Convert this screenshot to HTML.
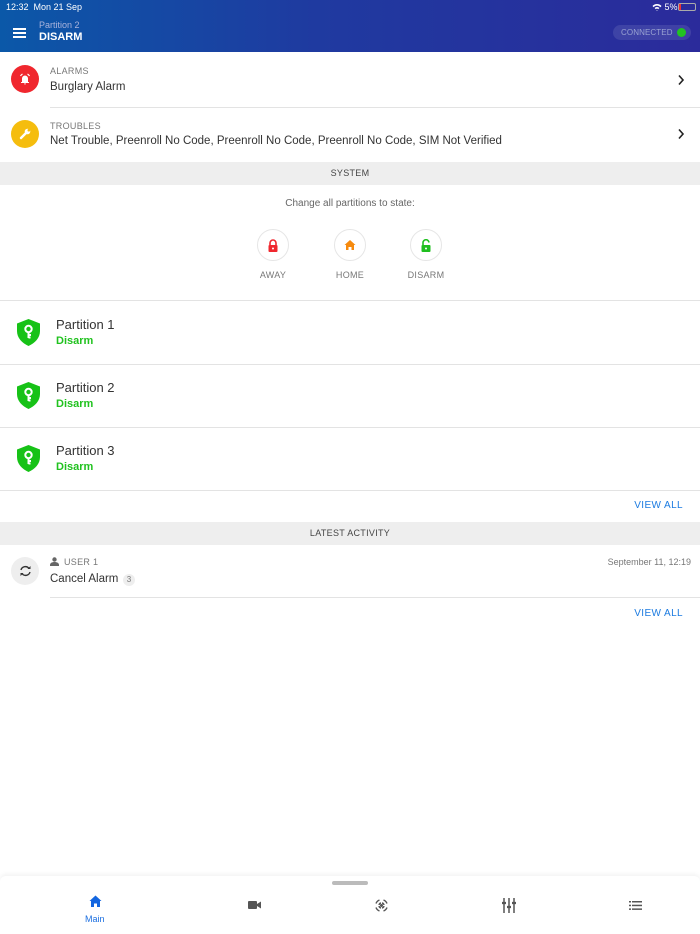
<!DOCTYPE html>
<html><head><meta charset="utf-8"><style>
*{margin:0;padding:0;box-sizing:border-box}
body{width:700px;height:934px;overflow:hidden;background:#fff;font-family:"Liberation Sans",sans-serif;position:relative;color:#333}
.a{position:absolute}
.hdr{left:0;top:0;width:700px;height:52px;background:linear-gradient(90deg,#0b58a8 0%,#1f3aa0 45%,#2b2b9b 100%)}
.w{color:#fff}
.line{height:1px;background:#e3e3e3}
.bar{left:0;width:700px;background:#eeeeee;font-size:9px;color:#444;text-align:center;letter-spacing:.3px}
.lbl{font-size:9px;color:#777;letter-spacing:.3px}
.txt{font-size:11.5px;color:#333}
.circ{width:32px;height:32px;border-radius:50%;border:1px solid #e6e6e6;display:flex;align-items:center;justify-content:center}
.cl{font-size:9px;color:#777;width:60px;text-align:center;letter-spacing:.3px}
.pt{font-size:13px;color:#333}
.ps{font-size:11px;color:#21c21f;font-weight:bold}
.va{font-size:10px;color:#1c7be0;letter-spacing:.4px;right:17px}
</style></head><body>
<div class="a hdr"></div>
<div class="a w" style="left:6px;top:2px;font-size:9px">12:32 &nbsp;Mon 21 Sep</div>
<div class="a w" style="left:652px;top:2px;font-size:9px">
<svg width="10" height="8" viewBox="0 0 10 8" style="vertical-align:-1px"><path d="M0.5 3A6 6 0 0 1 9.5 3L8.3 4.2A4.3 4.3 0 0 0 1.7 4.2Z M2.6 5A3.3 3.3 0 0 1 7.4 5L6.2 6.2A1.6 1.6 0 0 0 3.8 6.2Z M4.2 7L5 7.8 5.8 7Z" fill="#fff"/></svg> 5%</div>
<div class="a" style="left:678px;top:3px;width:18px;height:8px;border:1px solid #aaa;border-radius:2px"><div style="width:2px;height:6px;background:#e33"></div></div>
<div class="a" style="left:13px;top:28px;width:13px;height:2px;background:#fff;box-shadow:0 4px 0 #fff,0 8px 0 #fff"></div>
<div class="a" style="left:39px;top:20px;font-size:9px;color:#aab4dc">Partition 2</div>
<div class="a w" style="left:39px;top:31px;font-size:11px;font-weight:bold">DISARM</div>
<div class="a" style="left:613px;top:25px;width:78px;height:15px;border-radius:8px;background:rgba(255,255,255,.1)"></div>
<div class="a" style="left:621px;top:28px;font-size:8px;color:#9aa3d2;letter-spacing:.1px">CONNECTED</div>
<div class="a" style="left:677px;top:28px;width:9px;height:9px;border-radius:50%;background:#22c322"></div>

<div class="a" style="left:11px;top:65px;width:28px;height:28px;border-radius:50%;background:#f0272e;display:flex;align-items:center;justify-content:center">
<svg width="14" height="14" viewBox="0 0 14 14"><path d="M4 10V6.5A3 3 0 0 1 10 6.5V10H11V11H3V10Z M6 11.5H8A1 1 0 0 1 6 11.5" fill="#fff"/><path d="M2.5 4A5 5 0 0 1 4.5 2 M11.5 4A5 5 0 0 0 9.5 2" stroke="#fff" stroke-width="1.2" fill="none"/></svg></div>
<div class="a lbl" style="left:50px;top:66px">ALARMS</div>
<div class="a txt" style="left:50px;top:81px">Burglary Alarm</div>
<svg class="a" style="left:677px;top:74px" width="8" height="12" viewBox="0 0 8 12"><path d="M2 1.5L6 6 2 10.5" stroke="#222" stroke-width="1.6" fill="none"/></svg>
<div class="a line" style="left:50px;top:107px;width:650px"></div>
<div class="a" style="left:11px;top:120px;width:28px;height:28px;border-radius:50%;background:#f5bd0e;display:flex;align-items:center;justify-content:center">
<svg width="14" height="14" viewBox="0 0 14 14"><path d="M3 11L8 6" stroke="#fff" stroke-width="2.4" stroke-linecap="round"/><circle cx="9.5" cy="4.5" r="2.8" fill="#fff"/><circle cx="10.8" cy="3.2" r="1.3" fill="#f5bd0e"/></svg></div>
<div class="a lbl" style="left:50px;top:121px">TROUBLES</div>
<div class="a txt" style="left:50px;top:135px">Net Trouble, Preenroll No Code, Preenroll No Code, Preenroll No Code, SIM Not Verified</div>
<svg class="a" style="left:677px;top:128px" width="8" height="12" viewBox="0 0 8 12"><path d="M2 1.5L6 6 2 10.5" stroke="#222" stroke-width="1.6" fill="none"/></svg>

<div class="a bar" style="top:162px;height:23px;line-height:23px">SYSTEM</div>
<div class="a" style="left:0;width:700px;top:198px;text-align:center;font-size:10px;color:#666">Change all partitions to state:</div>
<div class="a circ" style="left:257px;top:229px"><svg width="12" height="13" viewBox="0 0 12 13"><path d="M3 6V4A3 3 0 0 1 9 4V6" stroke="#f0272e" stroke-width="1.6" fill="none"/><rect x="1.5" y="6" width="9" height="7" rx="1" fill="#f0272e"/><circle cx="6" cy="9.5" r="1" fill="#fff"/></svg></div>
<div class="a circ" style="left:334px;top:229px"><svg width="12" height="12" viewBox="0 0 12 12"><path d="M6 1L11.5 6H10V11H7.5V8H4.5V11H2V6H0.5Z" fill="#f68a0e"/></svg></div>
<div class="a circ" style="left:410px;top:229px"><svg width="12" height="13" viewBox="0 0 12 13"><path d="M3 6V4A3 3 0 0 1 9 3.5" stroke="#1fbf1f" stroke-width="1.6" fill="none"/><rect x="1.5" y="6" width="9" height="7" rx="1" fill="#1fbf1f"/><circle cx="6" cy="9.5" r="1" fill="#fff"/></svg></div>
<div class="a cl" style="left:243px;top:270px">AWAY</div>
<div class="a cl" style="left:320px;top:270px">HOME</div>
<div class="a cl" style="left:396px;top:270px">DISARM</div>
<div class="a line" style="left:0;top:300px;width:700px"></div>

<div class="a" style="left:0;top:300px;width:700px">
<svg class="a" style="left:17px;top:19px" width="23" height="27" viewBox="0 0 23 27"><path d="M11.5 0L23 4.5V12C23 19 18 24 11.5 27 5 24 0 19 0 12V4.5Z" fill="#17c217"/><circle cx="11.5" cy="10" r="3.2" stroke="#fff" stroke-width="2" fill="none"/><path d="M11.5 13V19M11.5 16H14M11.5 18.5H13.5" stroke="#fff" stroke-width="2"/></svg>
<div class="a pt" style="left:56px;top:17px">Partition 1</div><div class="a ps" style="left:56px;top:35px">Disarm</div></div>
<div class="a line" style="left:0;top:364px;width:700px"></div>
<div class="a" style="left:0;top:363px;width:700px">
<svg class="a" style="left:17px;top:19px" width="23" height="27" viewBox="0 0 23 27"><path d="M11.5 0L23 4.5V12C23 19 18 24 11.5 27 5 24 0 19 0 12V4.5Z" fill="#17c217"/><circle cx="11.5" cy="10" r="3.2" stroke="#fff" stroke-width="2" fill="none"/><path d="M11.5 13V19M11.5 16H14M11.5 18.5H13.5" stroke="#fff" stroke-width="2"/></svg>
<div class="a pt" style="left:56px;top:17px">Partition 2</div><div class="a ps" style="left:56px;top:35px">Disarm</div></div>
<div class="a line" style="left:0;top:427px;width:700px"></div>
<div class="a" style="left:0;top:426px;width:700px">
<svg class="a" style="left:17px;top:19px" width="23" height="27" viewBox="0 0 23 27"><path d="M11.5 0L23 4.5V12C23 19 18 24 11.5 27 5 24 0 19 0 12V4.5Z" fill="#17c217"/><circle cx="11.5" cy="10" r="3.2" stroke="#fff" stroke-width="2" fill="none"/><path d="M11.5 13V19M11.5 16H14M11.5 18.5H13.5" stroke="#fff" stroke-width="2"/></svg>
<div class="a pt" style="left:56px;top:17px">Partition 3</div><div class="a ps" style="left:56px;top:35px">Disarm</div></div>
<div class="a line" style="left:0;top:490px;width:700px"></div>
<div class="a va" style="top:500px">VIEW ALL</div>

<div class="a bar" style="top:522px;height:23px;line-height:23px">LATEST ACTIVITY</div>
<div class="a" style="left:11px;top:557px;width:28px;height:28px;border-radius:50%;background:#eeeeee;display:flex;align-items:center;justify-content:center">
<svg width="13" height="12" viewBox="0 0 13 12"><path d="M2 5A4.5 4.5 0 0 1 10 3.5 M11 7A4.5 4.5 0 0 1 3 8.5" stroke="#333" stroke-width="1.4" fill="none"/><path d="M8.5 4H11.5V1Z M4.5 8H1.5V11Z" fill="#333"/></svg></div>
<svg class="a" style="left:50px;top:557px" width="9" height="9" viewBox="0 0 9 9"><circle cx="4.5" cy="2.5" r="2.2" fill="#666"/><path d="M0 9V8C0 6 2 5 4.5 5S9 6 9 8V9Z" fill="#666"/></svg>
<div class="a lbl" style="left:64px;top:557px">USER 1</div>
<div class="a" style="right:9px;top:557px;font-size:9px;color:#777">September 11, 12:19</div>
<div class="a txt" style="left:50px;top:573px">Cancel Alarm</div>
<div class="a" style="left:123px;top:574px;width:12px;height:12px;border-radius:6px;background:#eee;font-size:8px;color:#777;text-align:center;line-height:12px">3</div>
<div class="a line" style="left:50px;top:597px;width:650px"></div>
<div class="a va" style="top:608px">VIEW ALL</div>

<div class="a" style="left:0;top:876px;width:700px;height:58px;background:#fff;border-radius:6px 6px 0 0;box-shadow:0 -2px 4px rgba(0,0,0,.05)"></div>
<div class="a" style="left:332px;top:881px;width:36px;height:4px;border-radius:2px;background:#bbb"></div>
<svg class="a" style="left:89px;top:895px" width="13" height="12" viewBox="0 0 13 12"><path d="M6.5 0.5L12.5 6H11V12H8V8.5H5V12H2V6H0.5Z" fill="#1466e0"/></svg>
<div class="a" style="left:85px;top:914px;font-size:9px;color:#1c6fe0">Main</div>
<svg class="a" style="left:248px;top:900px" width="13" height="10" viewBox="0 0 13 10"><rect x="0" y="1" width="9" height="8" rx="1" fill="#555"/><path d="M9 4L13 1.5V8.5L9 6Z" fill="#555"/></svg>
<svg class="a" style="left:374px;top:898px" width="15" height="15" viewBox="0 0 15 15" fill="none" stroke="#555" stroke-width="1.4"><path d="M2 5.5A6 6 0 0 1 5.5 2M9.5 2A6 6 0 0 1 13 5.5M13 9.5A6 6 0 0 1 9.5 13M5.5 13A6 6 0 0 1 2 9.5"/><path d="M5 7A2.5 2.5 0 0 1 7 5M8 5A2.5 2.5 0 0 1 10 7M10 8A2.5 2.5 0 0 1 8 10M7 10A2.5 2.5 0 0 1 5 8"/><circle cx="7.5" cy="7.5" r=".8" fill="#555"/></svg>
<svg class="a" style="left:501px;top:898px" width="16" height="15" viewBox="0 0 16 15" stroke="#555" stroke-width="1.5"><path d="M3 0V15M8 0V15M13 0V15"/><path d="M1 5H5M6 9H10M11 5H15" stroke-width="2.2"/></svg>
<svg class="a" style="left:629px;top:901px" width="13" height="9" viewBox="0 0 13 9" fill="#555"><rect x="0" y="0" width="2" height="1.5"/><rect x="3" y="0" width="10" height="1.5"/><rect x="0" y="3.7" width="2" height="1.5"/><rect x="3" y="3.7" width="10" height="1.5"/><rect x="0" y="7.4" width="2" height="1.5"/><rect x="3" y="7.4" width="10" height="1.5"/></svg>
</body></html>
